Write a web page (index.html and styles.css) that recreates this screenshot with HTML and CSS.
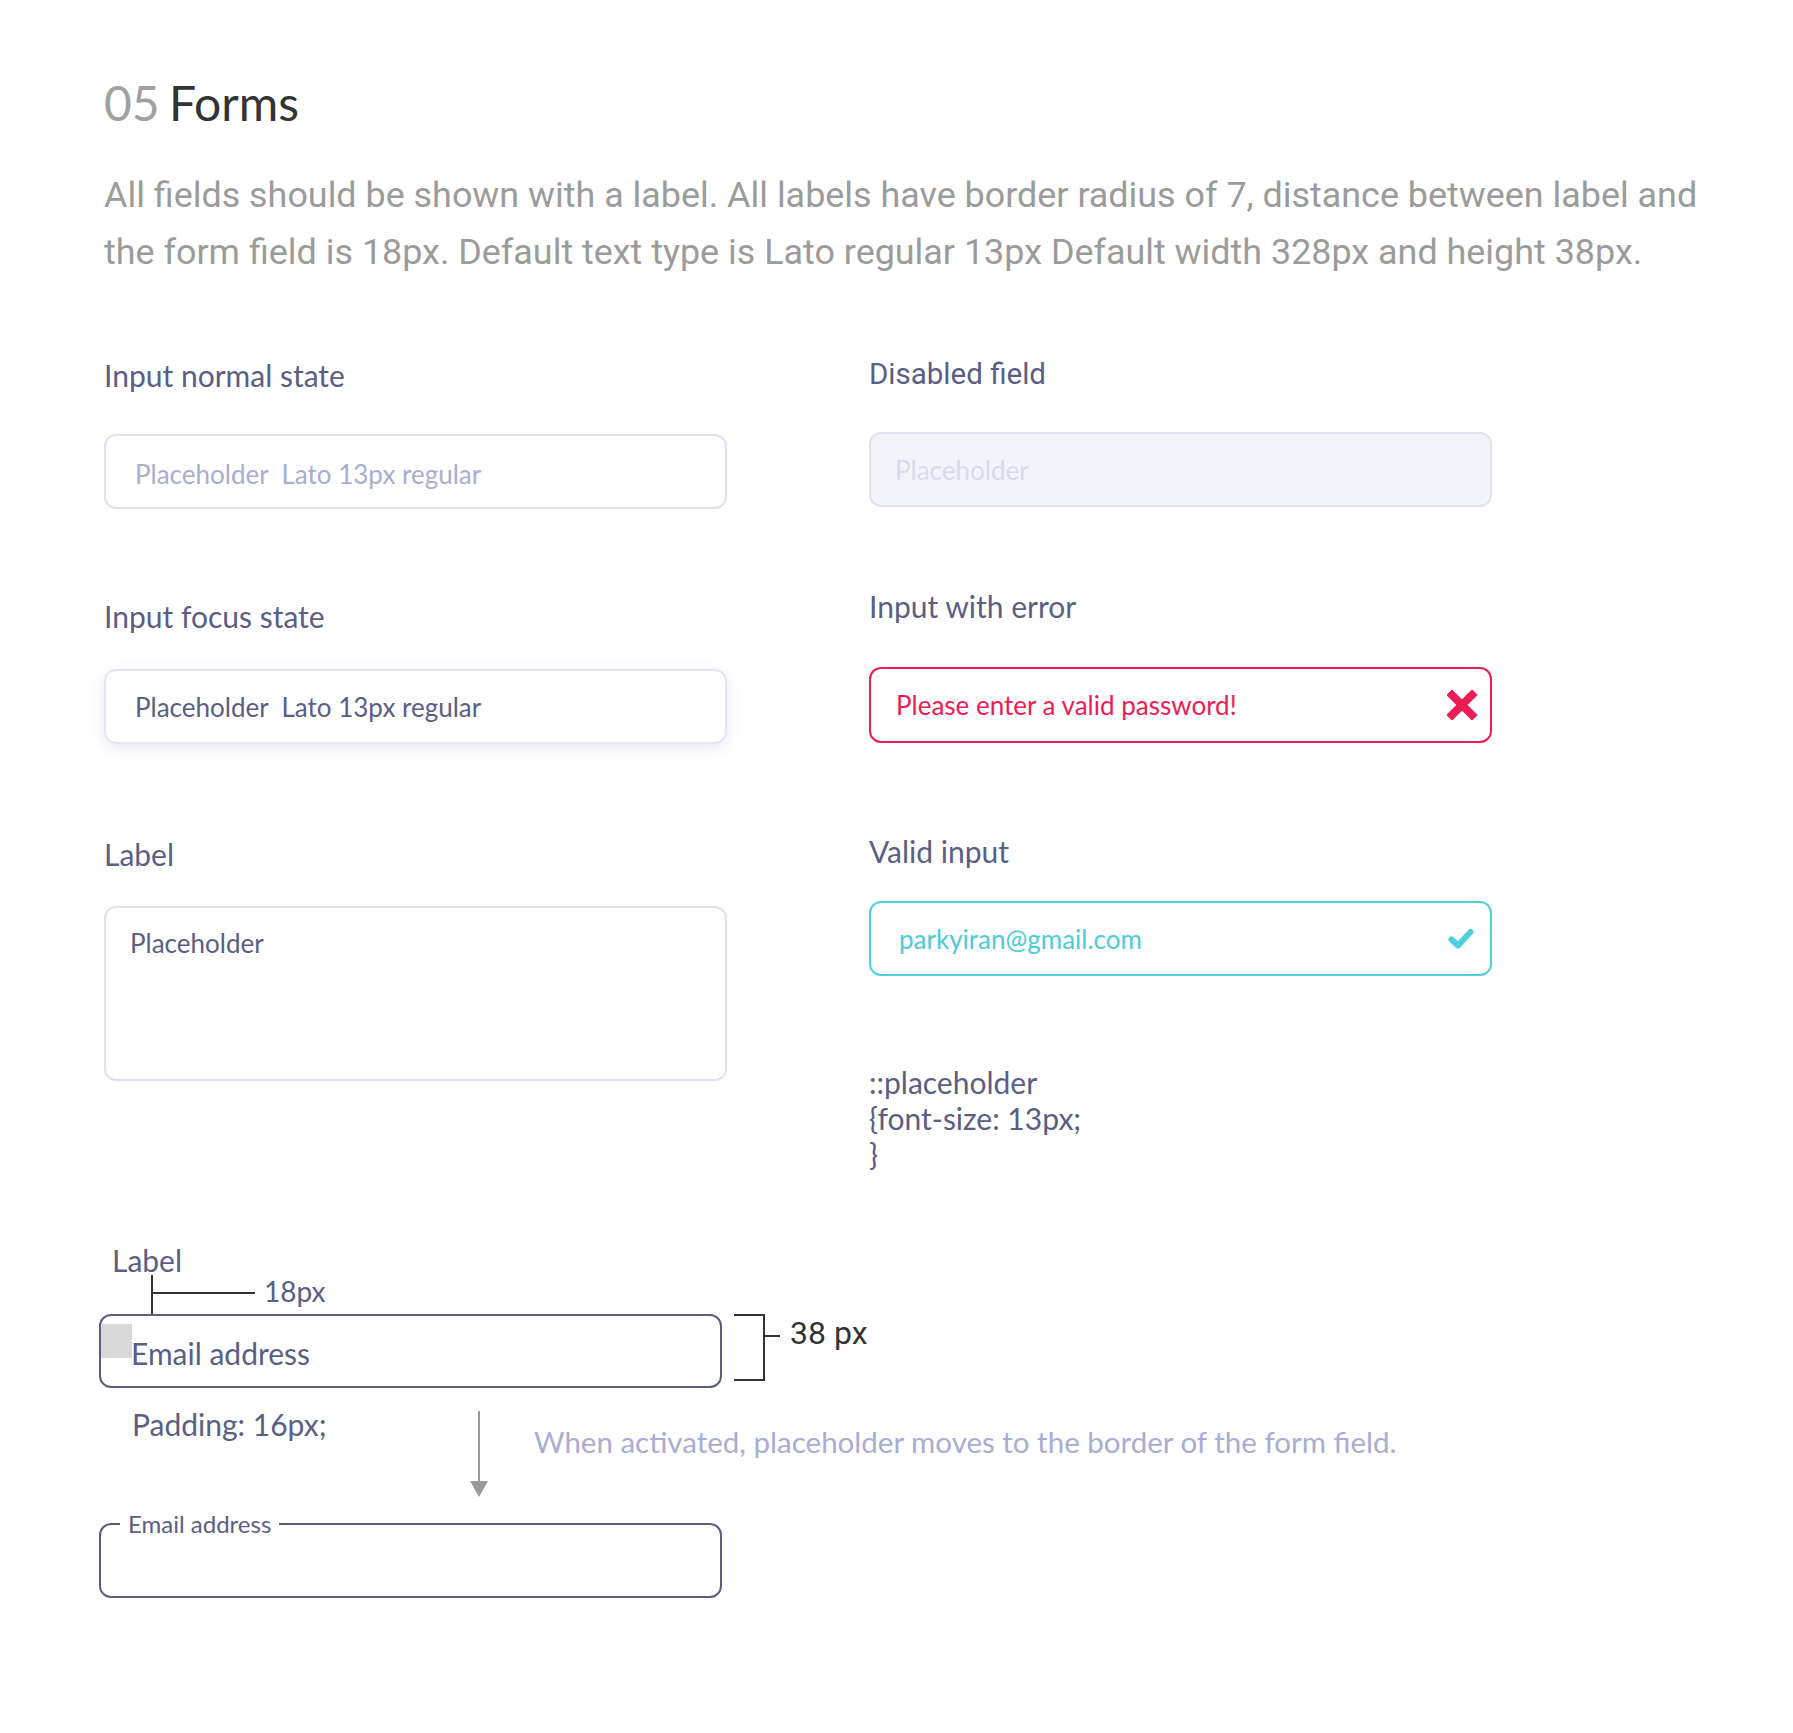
FILE: index.html
```html
<!DOCTYPE html>
<html lang="en">
<head>
<meta charset="utf-8">
<title>05 Forms</title>
<link rel="stylesheet" href="styles.css">
</head>
<body>
<main class="page">
  <h1 class="title"><span class="num">05</span> Forms</h1>
  <p class="intro">All fields should be shown with a label. All labels have border radius of 7, distance between label and the form field is 18px. Default text type is Lato regular 13px Default width 328px and height 38px.</p>

  <div class="cols">
    <div class="col col-left">
      <div class="label l1">Input normal state</div>
      <div class="field f-normal b1"><span class="ph">Placeholder&nbsp; Lato 13px regular</span></div>

      <div class="label l2">Input focus state</div>
      <div class="field f-focus b2"><span>Placeholder&nbsp; Lato 13px regular</span></div>

      <div class="label l3">Label</div>
      <div class="textarea"><span>Placeholder</span></div>
    </div>

    <div class="col col-right">
      <div class="label label-roboto r1">Disabled field</div>
      <div class="field f-disabled rb1"><span>Placeholder</span></div>

      <div class="label r2">Input with error</div>
      <div class="field f-error rb2">
        <span>Please enter a valid password!</span>
        <svg class="icon-x" width="30" height="30" viewBox="0 0 30 30" aria-hidden="true">
          <path d="M5 5 L25 25 M25 5 L5 25" stroke="#ee1c55" stroke-width="8" stroke-linecap="square"/>
        </svg>
      </div>

      <div class="label r3">Valid input</div>
      <div class="field f-valid rb3">
        <span>parkyiran@gmail.com</span>
        <svg class="icon-check" width="26" height="22" viewBox="0 0 26 22" aria-hidden="true">
          <path d="M3.5 11.5 L10 17.5 L22.5 4" fill="none" stroke="#4fd0dd" stroke-width="6" stroke-linecap="round" stroke-linejoin="round"/>
        </svg>
      </div>

      <div class="code">::placeholder<br>{font-size: 13px;<br>}</div>
    </div>
  </div>

  <section class="anatomy">
    <div class="a-label">Label</div>
    <span class="dim-v"></span>
    <span class="dim-h"></span>
    <span class="dim-text">18px</span>

    <div class="a-field">
      <span class="pad-mark"></span>
      <span>Email address</span>
    </div>

    <span class="bracket"></span>
    <span class="bracket-tick"></span>
    <span class="bracket-text">38 px</span>

    <div class="a-row">
      <div class="pad-text">Padding: 16px;</div>
      <div class="note">When activated, placeholder moves to the border of the form field.</div>
    </div>

    <span class="arrow"></span>

    <fieldset class="a-outline">
      <legend>Email address</legend>
    </fieldset>
  </section>
</main>
</body>
</html>
```

FILE: styles.css
```css
:root {
  --ink: #5a5e85;
  --line: #dee1f0;
}

* { box-sizing: border-box; }

html, body {
  margin: 0;
  padding: 0;
  background: #ffffff;
}

body {
  font-family: "Lato", "Liberation Sans", sans-serif;
  color: var(--ink);
}

.page {
  width: 1793px;
  min-height: 1733px;
  padding-left: 104px;
  padding-top: 78px;
}

.title {
  margin: 0;
  font-family: "Lato", sans-serif;
  font-weight: 400;
  font-size: 48px;
  line-height: 50px;
  color: #333333;
  word-spacing: -3px;
}

.title .num {
  color: #a0a0a0;
  font-weight: 400;
}

.intro {
  margin: 39px 0 0;
  width: 1635px;
  font-family: "Roboto", sans-serif;
  font-size: 35.9px;
  line-height: 57px;
  color: #9b9b9b;
}

.cols {
  display: flex;
  gap: 142px;
  margin-top: 77px;
}

.col {
  display: flex;
  flex-direction: column;
  width: 623px;
}

.label {
  font-size: 30px;
  line-height: 34px;
  color: var(--ink);
}

.label-roboto {
  font-family: "Roboto", sans-serif;
  font-size: 29.5px;
}

.field {
  height: 75px;
  border-radius: 12px;
  border: 2px solid var(--line);
  display: flex;
  align-items: center;
  justify-content: space-between;
  padding: 0 26px 0 29px;
  font-size: 26px;
}

.b1 { margin-top: 42px; }
.l2 { margin-top: 90px; }
.b2 { margin-top: 36px; height: 75px; }
.l3 { margin-top: 93px; }

.f-normal { padding-top: 4px; }
.f-normal .ph { color: #a9acd1; }

.f-focus {
  border-color: #e3e5f2;
  box-shadow: 0 4px 14px rgba(110, 116, 170, 0.16);
  color: var(--ink);
}

.textarea {
  margin-top: 35px;
  height: 175px;
  border: 2px solid var(--line);
  border-radius: 12px;
  padding: 20px 24px;
  font-size: 26px;
  line-height: 30px;
  color: var(--ink);
}

.col-right { margin-top: -1px; }

.rb1 { margin-top: 41px; height: 75px; }

.f-disabled {
  background: #f3f4f9;
  border-color: #e1e3f1;
  color: #d9dbec;
  padding-left: 24px;
}

.r2 { margin-top: 82px; }

.rb2 { margin-top: 44px; height: 76px; }

.f-error {
  border-color: #ee1c55;
  color: #ee1c55;
  padding-left: 25px;
  padding-right: 13px;
}

.r3 { margin-top: 91px; }

.rb3 { margin-top: 33px; height: 75px; }

.f-valid {
  border-color: #4fd0dd;
  color: #4ccbd9;
  padding-left: 28px;
  padding-right: 16px;
}

.code {
  margin-top: 88px;
  font-size: 30px;
  line-height: 36px;
  color: var(--ink);
}

/* ---------- anatomy diagram ---------- */

.anatomy {
  position: relative;
  margin-top: 71px;
  margin-left: -5px;
  width: 1400px;
  height: 400px;
}

.a-label {
  margin-left: 13px;
  font-size: 30px;
  line-height: 34px;
}

.dim-v {
  position: absolute;
  left: 52px;
  top: 32px;
  width: 2px;
  height: 39px;
  background: #333;
}

.dim-h {
  position: absolute;
  left: 53px;
  top: 49px;
  width: 103px;
  height: 2px;
  background: #333;
}

.dim-text {
  position: absolute;
  left: 165px;
  top: 31px;
  font-size: 28px;
  line-height: 34px;
}

.a-field {
  position: relative;
  margin-top: 37px;
  width: 623px;
  height: 74px;
  border: 2px solid var(--ink);
  border-radius: 12px;
  display: flex;
  align-items: center;
  padding-left: 30px;
  padding-top: 4px;
  font-size: 30px;
}

.pad-mark {
  position: absolute;
  left: 0;
  top: 8px;
  width: 31px;
  height: 34px;
  background: #d9d9d9;
}

.bracket {
  position: absolute;
  left: 635px;
  top: 71px;
  width: 31px;
  height: 67px;
  border: 2px solid #333;
  border-left: none;
}

.bracket-tick {
  position: absolute;
  left: 665px;
  top: 92px;
  width: 16px;
  height: 2px;
  background: #333;
}

.bracket-text {
  position: absolute;
  left: 691px;
  top: 73px;
  font-family: "Roboto", sans-serif;
  font-size: 32px;
  line-height: 34px;
  color: #333;
}

.a-row {
  display: flex;
  align-items: flex-start;
  margin-top: 19px;
}

.pad-text {
  flex-shrink: 0;
  margin-left: 33px;
  width: 402px;
  font-size: 30px;
  line-height: 34px;
}

.note {
  flex-shrink: 0;
  white-space: nowrap;
  margin-top: 18px;
  font-size: 29.5px;
  line-height: 34px;
  color: #a9acd3;
}

.arrow {
  position: absolute;
  left: 379px;
  top: 168px;
  width: 2px;
  height: 72px;
  background: #9a9a9a;
}

.arrow::after {
  content: "";
  position: absolute;
  left: -8px;
  top: 70px;
  border-left: 9px solid transparent;
  border-right: 9px solid transparent;
  border-top: 16px solid #9a9a9a;
}

.a-outline {
  margin: 52px 0 0;
  padding: 0;
  width: 623px;
  height: 87px;
  border: 2px solid var(--ink);
  border-radius: 12px;
}

.a-outline legend {
  margin-left: 19px;
  padding: 0 8px;
  font-size: 24px;
  line-height: 26px;
  color: var(--ink);
}
```
